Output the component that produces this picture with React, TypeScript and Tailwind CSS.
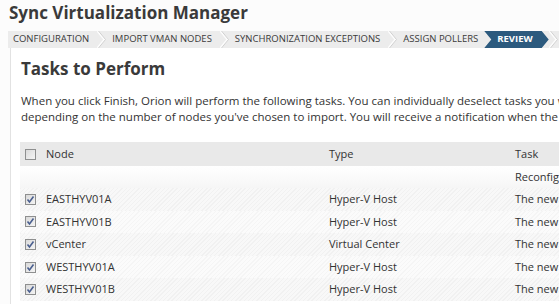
import React from 'react';

const steps = ['CONFIGURATION', 'IMPORT VMAN NODES', 'SYNCHRONIZATION EXCEPTIONS'];

const rows = [
  { node: 'EASTHYV01A', type: 'Hyper-V Host' },
  { node: 'EASTHYV01B', type: 'Hyper-V Host' },
  { node: 'vCenter', type: 'Virtual Center' },
  { node: 'WESTHYV01A', type: 'Hyper-V Host' },
  { node: 'WESTHYV01B', type: 'Hyper-V Host' },
];

function Chevron() {
  return (
    <svg width="9" height="17" viewBox="0 0 9 17" className="shrink-0">
      <polyline points="0.5,0 7.5,8.5 0.5,17" fill="none" stroke="#fdfdfd" strokeWidth="2" />
      <polyline points="1.5,0 8.5,8.5 1.5,17" fill="none" stroke="#cfcfcf" strokeWidth="1" />
    </svg>
  );
}

function Checkbox({ checked }: { checked?: boolean }) {
  return (
    <svg width="11" height="11" viewBox="0 0 11 11" className="shrink-0">
      <defs>
        <linearGradient id="cbg" x1="0" y1="0" x2="1" y2="1">
          <stop offset="0" stopColor="#d8d8d8" />
          <stop offset="1" stopColor="#f6f6f6" />
        </linearGradient>
      </defs>
      <rect x="0.5" y="0.5" width="10" height="10" fill="url(#cbg)" stroke="#8e8f8f" />
      {checked && <polyline points="2.5,5.5 4.5,8 8.5,2.5" fill="none" stroke="#4a5f8f" strokeWidth="1.6" />}
    </svg>
  );
}

export default function App() {
  return (
    <div className="w-[559px] h-[304px] overflow-hidden bg-[#fcfcfc] text-[#333] font-['Open_Sans',sans-serif]">
      {/* Title */}
      <h1 className="pl-[9px] pt-[1px] h-[31px] text-[17px] font-bold leading-[24px] text-[#3a3a3a] whitespace-nowrap">
        Sync Virtualization Manager
      </h1>

      {/* Wizard steps */}
      <div className="ml-[8px] h-[17px] flex items-center bg-[#ececec] text-[9.5px] text-[#3a3a3a] whitespace-nowrap overflow-hidden">
        {steps.map((s, i) => (
          <React.Fragment key={s}>
            <span className={i === 0 ? 'pl-[5px] pr-[8px]' : 'pl-[6px] pr-[8px]'}>{s}</span>
            <Chevron />
          </React.Fragment>
        ))}
        <span className="pl-[6px] pr-[6px]">ASSIGN POLLERS</span>
        <span className="h-full flex items-center pl-[13px] pr-[16px] bg-[#2c5a7e] text-white font-bold [clip-path:polygon(0_0,calc(100%_-_7px)_0,100%_50%,calc(100%_-_7px)_100%,0_100%,7px_50%)]">
          REVIEW
        </span>
        <Chevron />
        <span className="pl-[3px]">COMPLETE</span>
      </div>

      {/* Panel */}
      <div className="ml-[10px] h-full border-l border-[#e2e2e2] bg-white pl-[10px]">
        <h2 className="pt-[9px] text-[17px] font-bold leading-[24px] text-[#3a3a3a] whitespace-nowrap">Tasks to Perform</h2>
        <div className="mt-[12px] text-[11.5px] leading-[16px] whitespace-nowrap">
          <p>When you click Finish, Orion will perform the following tasks. You can individually deselect tasks you want to skip.</p>
          <p>depending on the number of nodes you've chosen to import. You will receive a notification when the process is done.</p>
        </div>

        <div className="mt-[17px] -ml-[1px] w-[720px] text-[11px]">
          <div className="h-[24px] flex items-center bg-[#e9e9e9]">
            <div className="w-[26px] pl-[5px] flex"><Checkbox /></div>
            <div className="w-[283px]">Node</div>
            <div className="w-[186px]">Type</div>
            <div>Task</div>
          </div>
          <div className="h-[22px] flex items-center bg-[linear-gradient(#ffffff,#f6f6f6)]">
            <div className="w-[26px]" />
            <div className="w-[283px]" />
            <div className="w-[186px]" />
            <div>Reconfigure polling</div>
          </div>
          {rows.map((r, i) => (
            <div
              key={r.node}
              className={`h-[22.6px] flex items-center ${
                i % 2 === 0
                  ? 'bg-[repeating-linear-gradient(135deg,#f1f1f1_0px,#f1f1f1_1px,#f8f8f8_1px,#f8f8f8_3px)]'
                  : 'bg-[repeating-linear-gradient(135deg,#f5f5f5_0px,#f5f5f5_1px,#fbfbfb_1px,#fbfbfb_3px)]'
              }`}
            >
              <div className="w-[26px] pl-[5px] flex"><Checkbox checked /></div>
              <div className="w-[283px]">{r.node}</div>
              <div className="w-[186px]">{r.type}</div>
              <div>The new node</div>
            </div>
          ))}
        </div>
      </div>
    </div>
  );
}
